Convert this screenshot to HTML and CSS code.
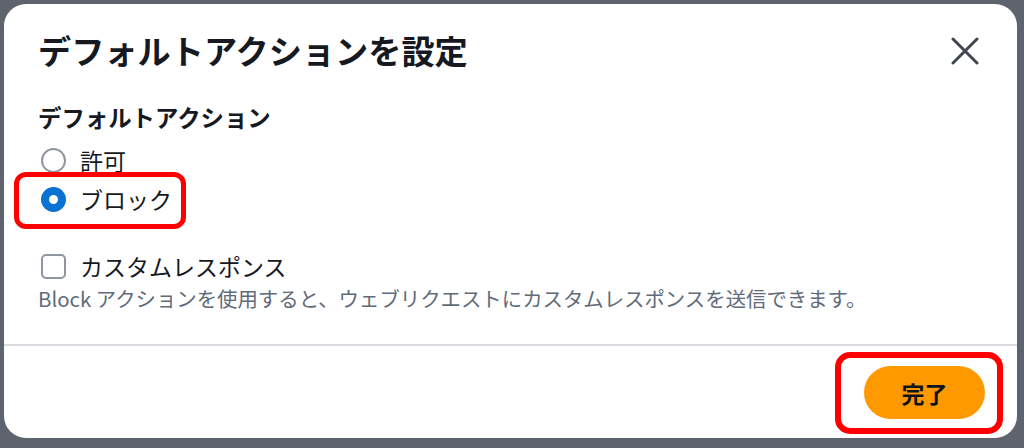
FILE: index.html
```html
<!DOCTYPE html>
<html lang="ja">
<head>
<meta charset="utf-8">
<link rel="stylesheet" href="styles.css">
</head>
<body>
<div class="modal">
  <div class="modal-header">
    <h2 class="title">デフォルトアクションを設定</h2>
    <button class="close" aria-label="閉じる">
      <svg width="28" height="28" viewBox="0 0 28 28"><path d="M2 2 L26 26 M26 2 L2 26" stroke="#414750" stroke-width="3" stroke-linecap="round" fill="none"/></svg>
    </button>
  </div>
  <div class="modal-body">
    <div class="field-label">デフォルトアクション</div>
    <div class="radio-row">
      <span class="radio"></span><span class="option-text">許可</span>
    </div>
    <div class="radio-row highlighted">
      <span class="radio checked"></span><span class="option-text">ブロック</span>
      <span class="mark mark-radio"></span>
    </div>
    <div class="check-row">
      <span class="checkbox"></span><span class="option-text">カスタムレスポンス</span>
    </div>
    <div class="description">Block アクションを使用すると、ウェブリクエストにカスタムレスポンスを送信できます。</div>
  </div>
  <div class="modal-footer">
    <div class="button-wrap">
      <button class="primary">完了</button>
      <span class="mark mark-button"></span>
    </div>
  </div>
</div>
</body>
</html>
```

FILE: styles.css
```css
html, body {
  margin: 0;
  padding: 0;
}
body {
  width: 1024px;
  height: 448px;
  background: #5e636e;
  overflow: hidden;
  font-family: "Noto Sans CJK JP", "Noto Sans", sans-serif;
  color: #16191f;
  padding-top: 4px;
  padding-left: 4px;
  box-sizing: border-box;
}
.modal {
  width: 1013px;
  height: 434px;
  background: #ffffff;
  border-radius: 22px;
  display: flex;
  flex-direction: column;
  box-sizing: border-box;
}
.modal-header {
  display: flex;
  align-items: center;
  justify-content: space-between;
  padding: 26px 38px 0 34px;
}
.title {
  margin: 0;
  font-size: 33.2px;
  line-height: 40px;
  font-weight: 700;
  color: #16191f;
}
.close {
  border: 0;
  background: none;
  padding: 0;
  width: 28px;
  height: 28px;
  display: flex;
  margin-top: 2px;
}
.modal-body {
  padding: 0 34px;
  height: 274px;
  display: flex;
  flex-direction: column;
  box-sizing: border-box;
}
.field-label {
  margin-top: 33px;
  font-size: 23.4px;
  line-height: 28px;
  font-weight: 700;
  color: #16191f;
  margin-bottom: 9.5px;
}
.radio-row, .check-row {
  display: flex;
  align-items: center;
  height: 39px;
  position: relative;
}
.check-row {
  margin-top: 28px;
}
.radio {
  width: 25px;
  height: 25px;
  border-radius: 50%;
  border: 2px solid #8f969f;
  box-sizing: border-box;
  margin-left: 3px;
}
.radio.checked {
  border: 8px solid #0972d3;
}
.checkbox {
  width: 25px;
  height: 25px;
  border-radius: 5px;
  border: 2px solid #8f969f;
  box-sizing: border-box;
  margin-left: 3px;
}
.option-text {
  margin-left: 14px;
  font-size: 23px;
  line-height: 30px;
  color: #16191f;
}
.description {
  font-size: 20.4px;
  line-height: 24px;
  color: #5f6b7a;
}
.modal-footer {
  border-top: 2px solid #d9dae0;
  display: flex;
  justify-content: flex-end;
  padding: 20px 32px 0 0;
}
.button-wrap {
  position: relative;
}
.primary {
  width: 121px;
  height: 53px;
  border-radius: 27px;
  border: 0;
  background: #ff9900;
  font-family: "Noto Sans CJK JP", "Noto Sans", sans-serif;
  font-size: 23px;
  font-weight: 700;
  color: #0f141a;
  padding: 0;
  display: block;
}
.mark {
  position: absolute;
  border: 5px solid #ff0000;
  box-sizing: border-box;
  pointer-events: none;
}
.mark-radio {
  left: -24px;
  top: -7.5px;
  width: 172px;
  height: 57px;
  border-radius: 12px;
}
.mark-button {
  left: -29px;
  top: -14px;
  width: 168px;
  height: 82px;
  border-width: 6px;
  border-radius: 15px;
}
```
